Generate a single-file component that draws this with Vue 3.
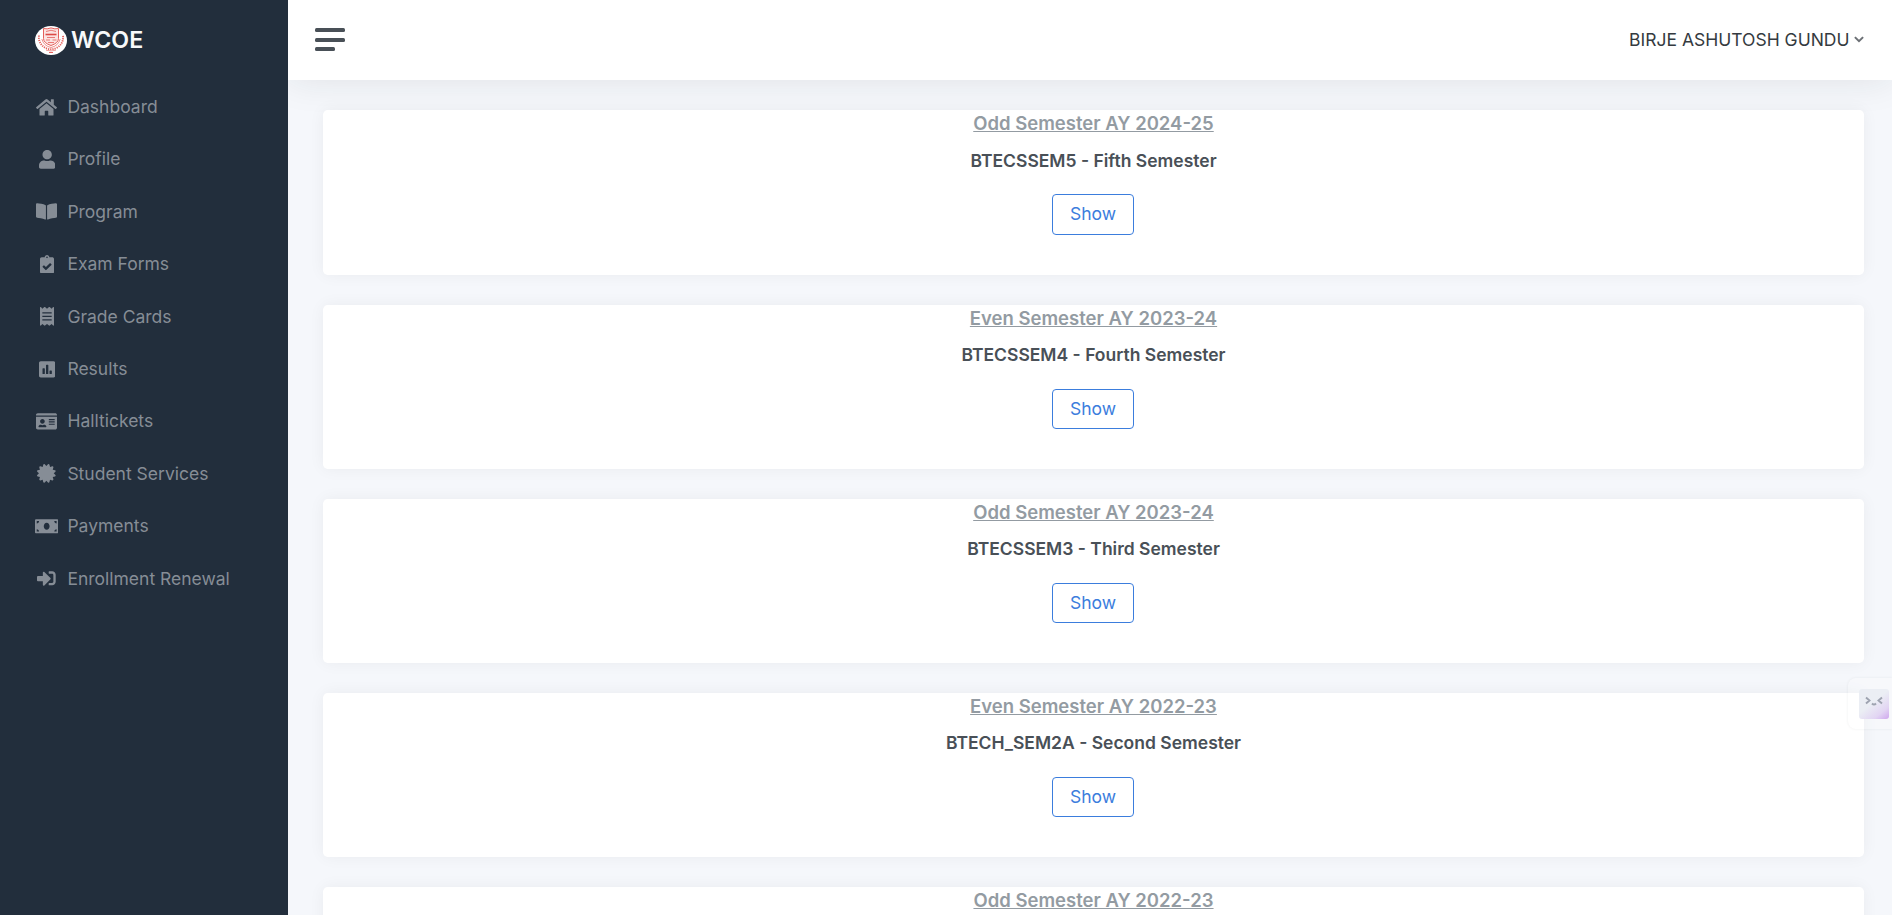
<script setup>
const line = (y) => `M64 ${y}h256v32H64z`
const items = [
  { label: 'Dashboard', w: 576, d: 'M280.37 148.26L96 300.11V464a16 16 0 0 0 16 16l112.06-.29a16 16 0 0 0 15.92-16V368a16 16 0 0 1 16-16h64a16 16 0 0 1 16 16v95.64a16 16 0 0 0 16 16.05L464 480a16 16 0 0 0 16-16V300L295.67 148.26a12.19 12.19 0 0 0-15.3 0zM571.6 251.47L488 182.56V44.05a12 12 0 0 0-12-12h-56a12 12 0 0 0-12 12v72.61L318.47 43a48 48 0 0 0-61 0L4.34 251.47a12 12 0 0 0-1.6 16.9l25.5 31A12 12 0 0 0 45.15 301l235.22-193.74a12.19 12.19 0 0 1 15.3 0L530.9 301a12 12 0 0 0 16.9-1.6l25.5-31a12 12 0 0 0-1.7-16.93z' },
  { label: 'Profile', w: 448, d: 'M224 256c70.7 0 128-57.3 128-128S294.7 0 224 0 96 57.3 96 128s57.3 128 128 128zm89.6 32h-16.7c-22.2 10.2-46.9 16-72.9 16s-50.6-5.8-72.9-16h-16.7C60.2 288 0 348.2 0 422.4V464c0 26.5 21.5 48 48 48h352c26.5 0 48-21.5 48-48v-41.6c0-74.2-60.2-134.4-134.4-134.4z' },
  { label: 'Program', w: 576, d: 'M542.22 32.05c-54.8 3.11-163.72 14.43-230.96 55.59-4.64 2.84-7.27 7.89-7.27 13.17v363.87c0 11.55 12.63 18.85 23.28 13.49 69.18-34.82 169.23-44.32 218.7-46.92 16.89-.89 30.02-14.43 30.02-30.66V62.75c.01-17.71-15.35-31.74-33.77-30.7zM264.73 87.64C197.5 46.48 88.58 35.17 33.78 32.05 15.36 31.01 0 45.04 0 62.75V400.6c0 16.24 13.13 29.78 30.02 30.66 49.49 2.6 149.59 12.11 218.77 46.95 10.62 5.35 23.21-1.94 23.21-13.46V100.63c0-5.29-2.62-10.14-7.27-12.99z' },
  { label: 'Exam Forms', w: 384, d: 'M336 64h-80c0-35.3-28.7-64-64-64s-64 28.7-64 64H48C21.5 64 0 85.5 0 112v352c0 26.5 21.5 48 48 48h288c26.5 0 48-21.5 48-48V112c0-26.5-21.5-48-48-48zM192 40c13.3 0 24 10.7 24 24s-10.7 24-24 24-24-10.7-24-24 10.7-24 24-24zm121.2 231.8l-143 141.8c-4.7 4.7-12.3 4.6-17-.1l-82.6-83.3c-4.7-4.7-4.6-12.3.1-17L99.1 285c4.7-4.7 12.3-4.6 17 .1l46 46.4 106-105.2c4.7-4.7 12.3-4.6 17 .1l28.2 28.4c4.7 4.8 4.6 12.3-.1 17z' },
  { label: 'Grade Cards', w: 384, d: 'M358.4 3.2L320 48 265.6 3.2a15.9 15.9 0 0 0-19.2 0L192 48 137.6 3.2a15.9 15.9 0 0 0-19.2 0L64 48 25.6 3.2C15-4.7 0 2.8 0 16v480c0 13.2 15 20.7 25.6 12.8L64 464l54.4 44.8a15.9 15.9 0 0 0 19.2 0L192 464l54.4 44.8a15.9 15.9 0 0 0 19.2 0L320 464l38.4 44.8c10.5 7.9 25.6.4 25.6-12.8V16c0-13.2-15-20.7-25.6-12.8z' + line(144) + line(240) + line(336) },
  { label: 'Results', w: 448, d: 'M400 32H48C21.5 32 0 53.5 0 80v352c0 26.5 21.5 48 48 48h352c26.5 0 48-21.5 48-48V80c0-26.5-21.5-48-48-48zM160 368c0 8.84-7.16 16-16 16h-32c-8.84 0-16-7.16-16-16V240c0-8.84 7.16-16 16-16h32c8.84 0 16 7.16 16 16v128zm96 0c0 8.84-7.16 16-16 16h-32c-8.84 0-16-7.16-16-16V144c0-8.84 7.16-16 16-16h32c8.84 0 16 7.16 16 16v224zm96 0c0 8.84-7.16 16-16 16h-32c-8.84 0-16-7.16-16-16v-64c0-8.84 7.16-16 16-16h32c8.84 0 16 7.16 16 16v64z' },
  { label: 'Halltickets', w: 576, d: 'M528 32H48C21.5 32 0 53.5 0 80v16h576V80c0-26.5-21.5-48-48-48zM0 432c0 26.5 21.5 48 48 48h480c26.5 0 48-21.5 48-48V128H0v304zM352 192h160v32H352zM352 256h160v32H352zM352 320h160v32H352zM176 192c35.3 0 64 28.7 64 64s-28.7 64-64 64-64-28.7-64-64 28.7-64 64-64zM67.1 396.2C75.5 370.5 99.6 352 128 352h8.2c12.3 5.1 25.7 8 39.8 8s27.6-2.9 39.8-8h8.2c28.4 0 52.5 18.5 60.9 44.2 3.2 9.9-5.2 19.8-15.6 19.8H82.7c-10.4 0-18.8-10-15.6-19.8z' },
  { label: 'Student Services', w: 512, d: 'M458.622 255.92l45.985-45.005c13.708-12.977 7.316-36.039-10.664-40.339l-62.65-15.99 17.661-62.015c4.991-17.838-11.829-34.663-29.661-29.671l-61.994 17.667-15.984-62.671C337.085.197 313.765-6.276 300.99 7.228L256 53.57 211.011 7.229c-12.63-13.351-36.047-7.234-40.325 10.668l-15.984 62.671-61.995-17.667C74.87 57.907 58.056 74.738 63.046 92.572l17.661 62.015-62.65 15.99C.069 174.878-6.31 197.944 7.392 210.915l45.985 45.005-45.985 45.004c-13.708 12.977-7.316 36.039 10.664 40.339l62.65 15.99-17.661 62.015c-4.991 17.838 11.829 34.663 29.661 29.671l61.994-17.667 15.984 62.671c4.439 18.575 27.696 24.018 40.325 10.668L256 458.61l44.989 46.001c12.5 13.488 35.987 7.486 40.325-10.668l15.984-62.671 61.994 17.667c17.836 4.994 34.651-11.837 29.661-29.671l-17.661-62.015 62.65-15.99c17.987-4.302 24.366-27.367 10.664-40.339l-45.984-45.004z' },
  { label: 'Payments', w: 640, d: 'M608 64H32C14.33 64 0 78.33 0 96v320c0 17.67 14.33 32 32 32h576c17.67 0 32-14.33 32-32V96c0-17.67-14.33-32-32-32zM48 400v-64c35.35 0 64 28.65 64 64H48zm0-224v-64h64c0 35.35-28.65 64-64 64zm272 176c-44.19 0-80-42.99-80-96 0-53.02 35.82-96 80-96s80 42.98 80 96c0 53.03-35.83 96-80 96zm272 48h-64c0-35.35 28.65-64 64-64v64zm0-224c-35.35 0-64-28.65-64-64h64v64z' },
  { label: 'Enrollment Renewal', w: 512, d: 'M416 448h-84c-6.6 0-12-5.4-12-12v-40c0-6.6 5.4-12 12-12h84c17.7 0 32-14.3 32-32V160c0-17.7-14.3-32-32-32h-84c-6.6 0-12-5.4-12-12V76c0-6.6 5.4-12 12-12h84c53 0 96 43 96 96v192c0 53-43 96-96 96zm-47-201L201 79c-15-15-41-4.5-41 17v96H24c-13.3 0-24 10.7-24 24v96c0 13.3 10.7 24 24 24h136v96c0 21.5 26 32 41 17l168-168c9.3-9.4 9.3-24.6 0-34z' },
]
const semesters = [
  { term: 'Odd Semester AY 2024-25', name: 'BTECSSEM5 - Fifth Semester' },
  { term: 'Even Semester AY 2023-24', name: 'BTECSSEM4 - Fourth Semester' },
  { term: 'Odd Semester AY 2023-24', name: 'BTECSSEM3 - Third Semester' },
  { term: 'Even Semester AY 2022-23', name: 'BTECH_SEM2A - Second Semester' },
  { term: 'Odd Semester AY 2022-23' },
]
</script>

<template>
  <div class="wrapper">
    <aside class="sidebar">
      <a class="brand">
        <svg class="logo" viewBox="0 0 32 29">
          <ellipse cx="16" cy="14.5" rx="16" ry="14.5" fill="#fff" />
          <g fill="none" stroke="#e4605c">
            <path d="M8.500 2.500q3.500 1 7.500-.6 4 1.600 7.500.6v10q0 4.500-7.500 7-7.500-2.500-7.500-7z" fill="#fbe3e2" stroke-width="1" />
            <path d="M11 5.500q5-2.500 10 0M12 11.500h8M11 14h4M17.500 14h4M13 16.500h6" stroke-width=".8" />
            <path d="M10.500 8.500h11" stroke="#dc4a46" stroke-width="1.600" />
            <path d="M4 9.500q-1 8 6.500 12.500 5.500 2.500 11 0Q29 17.500 28 9.500" stroke-width="1.900" stroke-dasharray="1.200 1" />
            <path d="M6.800 13q2 7 9.200 8.500 7.200-1.500 9.200-8.500" stroke-width=".7" />
            <path d="M11 24.200q5 1.500 10 0" stroke-width=".6" />
            <path d="M14 26.500h4" stroke-width="1" />
          </g>
        </svg>
        <span>WCOE</span>
      </a>
      <nav>
        <a v-for="item in items" :key="item.label" class="item">
          <span class="icon">
            <svg :viewBox="`0 0 ${item.w} 512`"><path :d="item.d" fill-rule="evenodd" /></svg>
          </span>
          <span>{{ item.label }}</span>
        </a>
      </nav>
    </aside>
    <div class="main">
      <header class="navbar">
        <div class="burger"><i></i><i></i><i class="short"></i></div>
        <div class="user">
          <span>BIRJE ASHUTOSH GUNDU</span>
          <svg viewBox="0 0 10 7"><path d="M.9 1.100L5 5.200l4.100-4.100" /></svg>
        </div>
      </header>
      <main class="content">
        <section v-for="s in semesters" :key="s.term" class="card">
          <h4>{{ s.term }}</h4>
          <template v-if="s.name">
            <h5>{{ s.name }}</h5>
            <button>Show</button>
          </template>
        </section>
      </main>
    </div>
    <div class="assistant">
      <svg viewBox="0 0 30 30">
        <defs>
          <linearGradient id="tile" x1="0.200" y1="0" x2="1" y2="1">
            <stop offset="0.400" stop-color="#ebeef4" />
            <stop offset="0.750" stop-color="#e2d5f3" />
            <stop offset="1" stop-color="#cfa6ee" />
          </linearGradient>
        </defs>
        <rect width="30" height="30" rx="3" fill="url(#tile)" />
        <path d="M7 8.500l3.500 3-3.500 3M23 8.500l-3.500 3 3.500 3M13 14.500q2 2.200 4 0" fill="none" stroke="#9ea3b0" stroke-width="1.900" />
      </svg>
    </div>
  </div>
</template>

<style>
body { margin: 0; overflow: hidden; background: #f5f7fb; }
</style>

<style scoped>
.wrapper {
  position: relative;
  display: flex;
  height: 915px;
  overflow: hidden;
  font-family: Inter, "Liberation Sans", sans-serif;
  font-size: 17.5px;
  color: #495057;
}
.sidebar { position: relative; z-index: 1; flex: none; width: 288px; background: #222e3c; }
.brand {
  display: flex;
  align-items: center;
  gap: 4px;
  height: 80px;
  padding-left: 35px;
  color: #f8f9fa;
  font-size: 23.2px;
  font-weight: 600;
}
.logo { width: 32px; height: 29px; margin-top: 1px; }
nav { padding-top: .3px; }
.item {
  display: flex;
  align-items: center;
  height: 52.4px;
  padding-left: 35px;
  color: #868d96;
}
.icon { display: flex; justify-content: center; width: 23.4px; margin-right: 9px; padding-top: .8px; }
.icon svg { display: block; height: 18.7px; fill: currentColor; }
.main { flex: 1; display: flex; flex-direction: column; min-width: 0; background: #f5f7fb; }
.navbar {
  flex: none;
  display: flex;
  align-items: center;
  justify-content: space-between;
  box-sizing: border-box;
  height: 80px;
  padding: 0 28px 0 27px;
  background: #fff;
  box-shadow: 0 0 37px 0 rgba(33, 37, 41, .1);
}
.burger { display: flex; flex-direction: column; gap: 6px; padding-bottom: 1px; }
.burger i { width: 30px; height: 4px; border-radius: 1.5px; background: #495057; }
.burger .short { width: 20px; margin-top: -1px; }
.user { display: flex; align-items: center; gap: 4.5px; padding-bottom: 1.5px; color: #343a40; }
.user svg { width: 10px; height: 7px; fill: none; stroke: #6c7075; stroke-width: 2; }
.content { display: flex; flex-direction: column; gap: 30px; padding: 30.4px 28px 0 35px; }
.card {
  flex: none;
  display: flex;
  flex-direction: column;
  align-items: center;
  box-sizing: border-box;
  height: 164.2px;
  border-radius: 4.7px;
  background: #fff;
  box-shadow: 0 0 16px 0 rgba(33, 37, 41, .05);
}
h4 { margin: 2.1px 0 0; font-size: 18.5px; font-weight: 600; line-height: 22px; color: #939ba2; text-decoration: underline; }
h5 { margin: 15.2px 0 0; font-size: 17.5px; font-weight: 600; line-height: 22px; color: #495057; }
button {
  box-sizing: border-box;
  margin: 22.8px 1px 0 0;
  width: 82px;
  height: 40.2px;
  padding: 0 0 1.4px;
  border: 1px solid #3b7ddd;
  border-radius: 4px;
  background: transparent;
  color: #3b7ddd;
  font: inherit;
}
.assistant {
  position: absolute;
  top: 678px;
  right: 0;
  z-index: 2;
  box-sizing: border-box;
  width: 44px;
  height: 51px;
  padding: 11px 0 0 11px;
  border-radius: 8px 0 0 8px;
  background: rgba(255, 255, 255, .2);
  box-shadow: 0 0 3px rgba(33, 37, 41, .07);
}
.assistant svg { display: block; width: 30px; height: 30px; }
</style>
